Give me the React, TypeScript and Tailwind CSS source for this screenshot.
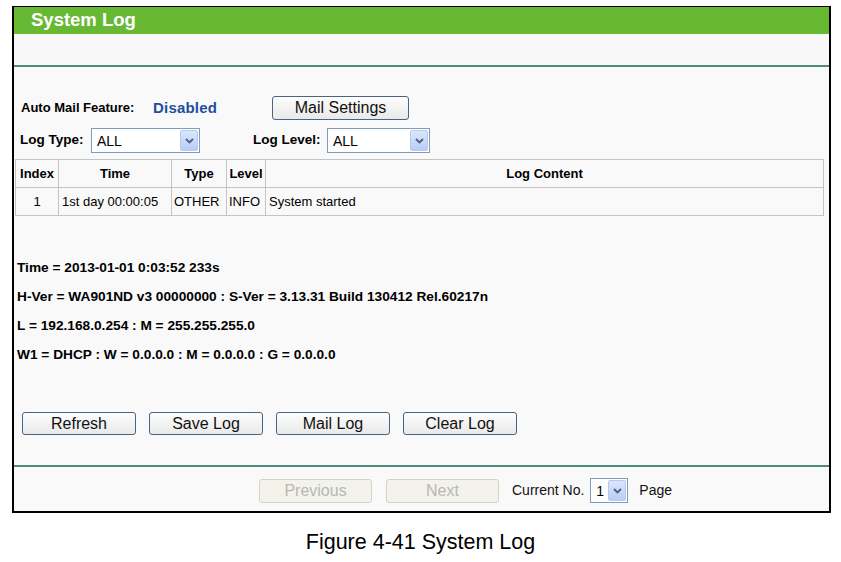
import React from "react";

const Chevron: React.FC = () => (
  <svg width="9" height="6" viewBox="0 0 9 6" className="block">
    <path d="M1 1 L4.5 4.5 L8 1" fill="none" stroke="#4b5f86" strokeWidth="1.8" />
  </svg>
);

const FakeSelect: React.FC<{ value: string; width: string }> = ({ value, width }) => (
  <div
    className={`${width} h-[25px] flex items-center justify-between border border-[#7f9db9] bg-white pl-[5px] pr-[1px]`}
  >
    <span className="text-[14px] text-black leading-none">{value}</span>
    <div className="w-[18px] h-[21px] flex items-center justify-center rounded-[2px] border border-[#b6c8ee] bg-gradient-to-b from-[#dce6fb] to-[#b9cdf6]">
      <Chevron />
    </div>
  </div>
);

const Btn: React.FC<{ label: string; className?: string }> = ({ label, className }) => (
  <button
    className={`h-[23px] rounded-[3px] border border-[#4a6482] bg-gradient-to-b from-[#fdfdfd] to-[#e9e9e9] text-[16px] leading-none text-[#111] ${className ?? ""}`}
  >
    {label}
  </button>
);

const DisabledBtn: React.FC<{ label: string }> = ({ label }) => (
  <button className="w-[113px] h-[24px] rounded-[3px] border border-[#d4d4c4] bg-[#f3f3ec] text-[16px] leading-none text-[#b8b8b0]">
    {label}
  </button>
);

const infoLines = [
  "Time = 2013-01-01 0:03:52 233s",
  "H-Ver = WA901ND v3 00000000 : S-Ver = 3.13.31 Build 130412 Rel.60217n",
  "L = 192.168.0.254 : M = 255.255.255.0",
  "W1 = DHCP : W = 0.0.0.0 : M = 0.0.0.0 : G = 0.0.0.0",
];

export default function App() {
  return (
    <div className="w-[841px] h-[562px] bg-white pt-[6px] font-['Liberation_Sans',Arial,sans-serif] text-black">
      <div className="ml-[12px] w-[819px] border-2 border-t-[1px] border-black bg-[#f9f9f9]">
        {/* title bar */}
        <div className="h-[27px] bg-[#67b934] flex items-center pl-[17px]">
          <span className="text-white font-bold text-[18.5px] leading-none">System Log</span>
        </div>
        <div className="h-[31px] bg-[#f8f8f8]" />
        <div className="h-[2px] bg-[#4c8c7a]" />

        {/* content */}
        <div className="h-[398px] pt-[29px]">
          <div className="flex items-center h-[24px] pl-[7px]">
            <span className="font-bold text-[13px] w-[132px]">Auto Mail Feature:</span>
            <span className="font-bold text-[15px] text-[#1f4f9b] w-[119px] tracking-[0.2px]">Disabled</span>
            <Btn label="Mail Settings" className="w-[137px] h-[24px]" />
          </div>

          <div className="flex items-center h-[25px] mt-[8px] pl-[6px]">
            <span className="font-bold text-[13.5px] w-[71px]">Log Type:</span>
            <FakeSelect value="ALL" width="w-[109px]" />
            <span className="font-bold text-[13.5px] ml-[53px] w-[74px]">Log Level:</span>
            <FakeSelect value="ALL" width="w-[103px]" />
          </div>

          <table className="mt-[6px] ml-[1px] w-[809px] border-collapse text-[13px] table-fixed">
            <colgroup>
              <col className="w-[43px]" />
              <col className="w-[113px]" />
              <col className="w-[55px]" />
              <col className="w-[39px]" />
              <col />
            </colgroup>
            <thead>
              <tr className="h-[28px]">
                {["Index", "Time", "Type", "Level", "Log Content"].map((h) => (
                  <th key={h} className="border border-[#c4c4c4] font-bold text-center px-0">
                    {h}
                  </th>
                ))}
              </tr>
            </thead>
            <tbody>
              <tr className="h-[28px]">
                <td className="border border-[#c4c4c4] text-center">1</td>
                <td className="border border-[#c4c4c4] pl-[3px] whitespace-nowrap">1st day 00:00:05</td>
                <td className="border border-[#c4c4c4] pl-[2px]">OTHER</td>
                <td className="border border-[#c4c4c4] pl-[2px]">INFO</td>
                <td className="border border-[#c4c4c4] pl-[3px]">System started</td>
              </tr>
            </tbody>
          </table>

          <div className="mt-[38px] pl-[3px]">
            {infoLines.map((l) => (
              <div key={l} className="h-[29px] flex items-center font-bold text-[13.7px] whitespace-nowrap">
                {l}
              </div>
            ))}
          </div>

          <div className="flex gap-[13px] mt-[42px] pl-[8px]">
            <Btn label="Refresh" className="w-[114px]" />
            <Btn label="Save Log" className="w-[114px]" />
            <Btn label="Mail Log" className="w-[114px]" />
            <Btn label="Clear Log" className="w-[114px]" />
          </div>
        </div>

        <div className="h-[2px] bg-[#4c8c7a]" />

        {/* footer */}
        <div className="h-[44px] flex items-start pt-[12px] pl-[245px]">
          <DisabledBtn label="Previous" />
          <div className="w-[14px]" />
          <DisabledBtn label="Next" />
          <span className="text-[14px] ml-[13px] mt-[1px] text-[#111]">Current No.</span>
          <div className="ml-[6px] -mt-[1px]">
            <FakeSelect value="1" width="w-[38px]" />
          </div>
          <span className="text-[14px] ml-[11px] mt-[1px] text-[#111]">Page</span>
        </div>
      </div>

      <div className="text-center text-[21.5px] mt-[19px] leading-none">Figure 4-41 System Log</div>
    </div>
  );
}
